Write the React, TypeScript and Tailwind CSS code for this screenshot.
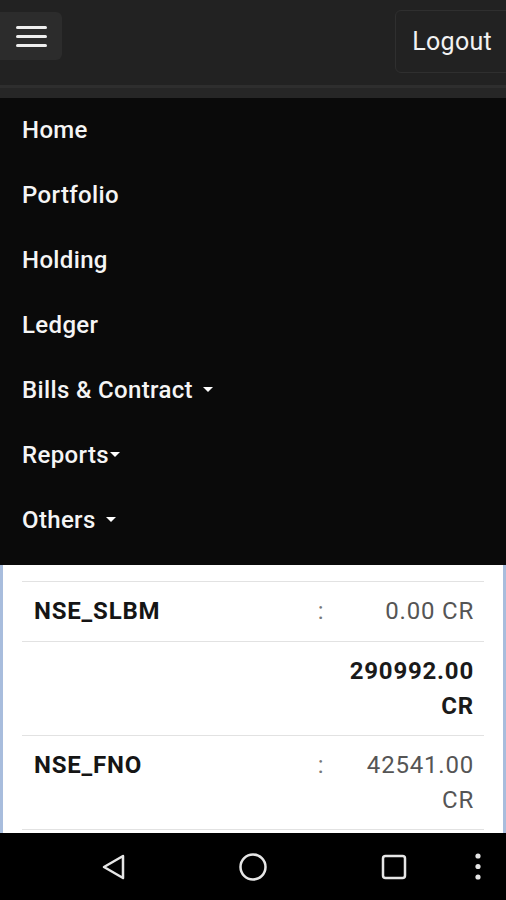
import React from "react";

const menu = [
  { label: "Home" },
  { label: "Portfolio" },
  { label: "Holding" },
  { label: "Ledger" },
  { label: "Bills & Contract", caret: "spaced" },
  { label: "Reports", caret: "tight" },
  { label: "Others", caret: "spaced" },
];

const rows = [
  { name: "NSE_SLBM", colon: true, value: "0.00 CR", strong: false, h: "h-[60px]" },
  { name: "", colon: false, value: "290992.00 CR", strong: true, h: "h-[94px]" },
  { name: "NSE_FNO", colon: true, value: "42541.00 CR", strong: false, h: "h-[94px]" },
];

function Caret({ tight }: { tight?: boolean }) {
  return <span className={`inline-block h-0 w-0 border-x-[5px] border-t-[5px] border-x-transparent border-t-white align-middle ${tight ? "ml-[1px]" : "ml-[10px]"}`} />;
}

export default function App() {
  return (
    <div className="flex h-[900px] w-[506px] flex-col overflow-hidden bg-black font-['Roboto','Liberation_Sans',sans-serif]">
      <header className="flex h-[85px] shrink-0 items-start justify-between bg-[#222]">
        <button className="mt-3 flex h-12 w-[62px] flex-col items-center justify-center gap-[6px] rounded-r-md bg-[#2c2c2c] pl-[1px]" aria-label="Toggle navigation">
          <span className="block h-[3px] w-[31px] rounded-sm bg-[#eee]" />
          <span className="block h-[3px] w-[31px] rounded-sm bg-[#eee]" />
          <span className="block h-[3px] w-[31px] rounded-sm bg-[#eee]" />
        </button>
        <button className="-mr-3 mt-[10px] h-[63px] rounded-md border border-[#2f2f2f] bg-[#222] pl-[16px] pr-[25px] text-[25px] tracking-[0.3px] text-[#f2f2f2]">Logout</button>
      </header>
      <div className="h-[3px] shrink-0 bg-[#2e2e2e]" />
      <div className="h-[10px] shrink-0 bg-[#262626]" />

      <nav className="shrink-0 bg-[#0a0a0a] pb-3">
        {menu.map((m) => (
          <div key={m.label} className="flex h-[65px] items-center pl-[22px] pb-[2px] text-[24px] font-medium tracking-[0.35px] text-[#f5f5f5]">
            {m.label}
            {m.caret && <Caret tight={m.caret === "tight"} />}
          </div>
        ))}
      </nav>

      <main className="flex-1 overflow-hidden border-x-[3px] border-x-[#a8bddd] bg-white px-[19px] pt-4">
        <div className="border-t border-[#e2e2e2]">
          {rows.map((r, i) => (
            <div key={i} className={`flex ${r.h} items-start border-b border-[#e2e2e2] py-3 text-[24px] leading-[35px] tracking-[0.8px]`}>
              <div className="flex-1 pl-3 font-bold text-[#151515]">{r.name}</div>
              <div className="w-[46px] text-center text-[#777]">{r.colon ? ":" : ""}</div>
              <div className={`w-[140px] pr-[10px] text-right ${r.strong ? "font-bold text-[#1a1a1a]" : "text-[#555]"}`}>{r.value}</div>
            </div>
          ))}
        </div>
      </main>

      <footer className="flex h-[67px] shrink-0 items-center bg-black text-[#e6e6e6]">
        <svg className="absolute left-[100px]" width="28" height="28" viewBox="0 0 28 28" fill="none" stroke="currentColor" strokeWidth="2.5" strokeLinejoin="round">
          <path d="M23 3 L4 14 L23 25 Z" />
        </svg>
        <svg className="absolute left-[239px]" width="28" height="28" viewBox="0 0 28 28" fill="none" stroke="currentColor" strokeWidth="2.5">
          <circle cx="14" cy="14" r="12.5" />
        </svg>
        <svg className="absolute left-[380px]" width="28" height="28" viewBox="0 0 28 28" fill="none" stroke="currentColor" strokeWidth="2.5">
          <rect x="3" y="3" width="22" height="22" rx="2.5" />
        </svg>
        <svg className="absolute left-[472px]" width="12" height="30" viewBox="0 0 12 30" fill="currentColor">
          <circle cx="6" cy="4" r="2.6" />
          <circle cx="6" cy="14.5" r="2.6" />
          <circle cx="6" cy="25" r="2.6" />
        </svg>
      </footer>
    </div>
  );
}
